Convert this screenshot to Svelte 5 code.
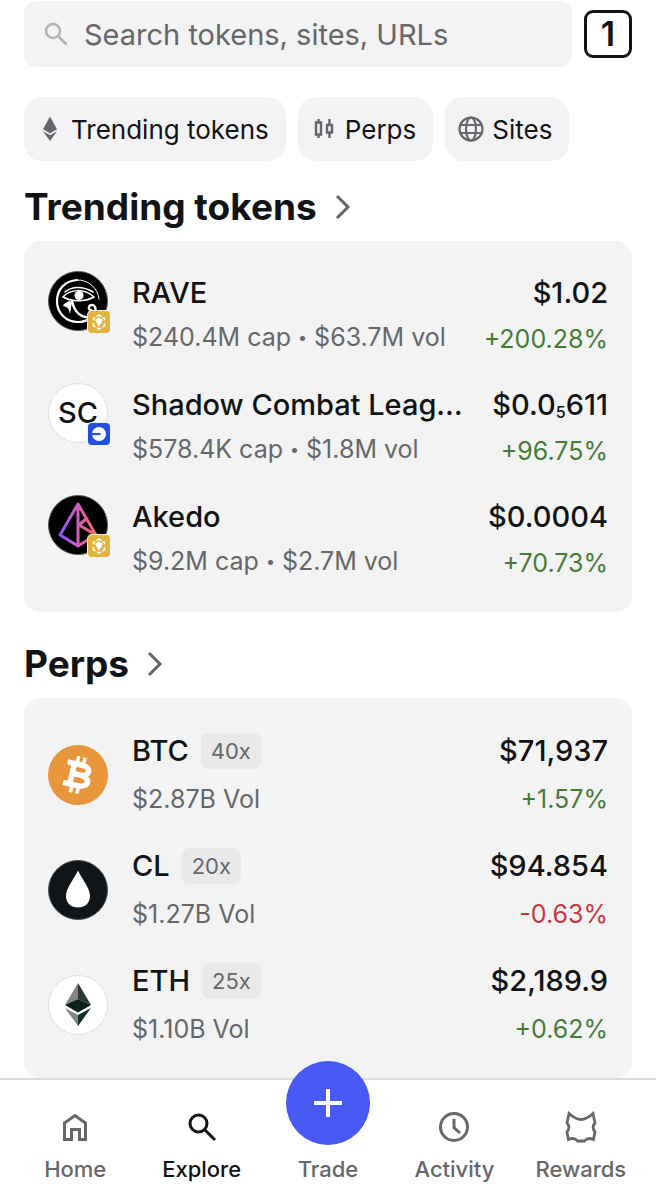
<script lang="ts">
  type Row = {
    icon: string;
    name: string;
    badge?: string;
    leverage?: string;
    detail: string[];
    price: string;
    sub?: string;
    rest?: string;
    change: string;
  };

  const chips = [
    { icon: "eth", label: "Trending tokens" },
    { icon: "candles", label: "Perps" },
    { icon: "globe", label: "Sites" },
  ];

  const tokens: Row[] = [
    { icon: "rave", badge: "bnb", name: "RAVE", detail: ["$240.4M cap", "$63.7M vol"], price: "$1.02", change: "+200.28%" },
    { icon: "sc", badge: "base", name: "Shadow Combat Leag…", detail: ["$578.4K cap", "$1.8M vol"], price: "$0.0", sub: "5", rest: "611", change: "+96.75%" },
    { icon: "akedo", badge: "bnb", name: "Akedo", detail: ["$9.2M cap", "$2.7M vol"], price: "$0.0004", change: "+70.73%" },
  ];

  const perps: Row[] = [
    { icon: "btc", name: "BTC", leverage: "40x", detail: ["$2.87B Vol"], price: "$71,937", change: "+1.57%" },
    { icon: "oil", name: "CL", leverage: "20x", detail: ["$1.27B Vol"], price: "$94.854", change: "-0.63%" },
    { icon: "ethereum", name: "ETH", leverage: "25x", detail: ["$1.10B Vol"], price: "$2,189.9", change: "+0.62%" },
  ];

  const navItems = ["Home", "Explore", "Trade", "Activity", "Rewards"];

  let query = $state("");
  let active = $state("Explore");
</script>

{#snippet chipIcon(name: string)}
  {#if name === "eth"}
    <svg class="chip-icon narrow" viewBox="0 0 16 26" fill="currentColor" aria-hidden="true">
      <path d="M8 0.500 15 13.200 8 17.200 1 13.200Z" />
      <path d="M1 15.200 8 19.200 15 15.200 8 25Z" />
    </svg>
  {:else if name === "candles"}
    <svg class="chip-icon medium" viewBox="0 0 20 26" fill="none" stroke="currentColor" stroke-width="2.400" aria-hidden="true">
      <path d="M2 6.500H7V18.500H2ZM4.500 3V6.500M4.500 18.500V22M13 9H18V16.500H13ZM15.500 3V9M15.500 16.500V22" />
    </svg>
  {:else}
    <svg class="chip-icon" viewBox="0 0 26 26" fill="none" stroke="currentColor" stroke-width="2.200" aria-hidden="true">
      <circle cx="13" cy="13" r="11.500" />
      <ellipse cx="13" cy="13" rx="5" ry="11.500" />
      <path d="M2.500 9H23.500M2.500 17H23.500" />
    </svg>
  {/if}
{/snippet}

{#snippet avatar(name: string)}
  {#if name === "sc"}
    <span class="avatar initials">SC</span>
  {:else}
    <svg class="avatar" viewBox="0 0 60 60" aria-hidden="true">
      {#if name === "rave"}
        <circle cx="30" cy="30" r="29.500" fill="#000" stroke="#55585b" />
        <g fill="none" stroke="#fff" stroke-linecap="round">
          <path d="M29 9A21 21 0 0 1 51 28" stroke-width="1" />
          <path d="M29 9C17 10 9 18 9 30C9 42 18 51 30 51C34 51 38 50 41 48" stroke-width="2.200" />
          <path d="M17 21C24 15 35 15 45 21" stroke-width="1.500" />
          <path d="M15 26C22 18 36 17 46 26C37 31 24 31 15 26Z" stroke-width="1.500" />
          <path d="M24 30C26 41 34 48 43 46C49 44 49 34 44 34C40 34 40 39 43 39" stroke-width="2.400" />
        </g>
        <circle cx="31" cy="24.500" r="4.500" fill="#fff" />
        <path d="M16 33 21 30 24 31 22 43C21 38 20 36 15 35Z" fill="#fff" />
      {:else if name === "akedo"}
        <defs>
          <linearGradient id="akedo" x1="10" y1="35" x2="50" y2="35" gradientUnits="userSpaceOnUse">
            <stop offset="0" stop-color="#8150ff" />
            <stop offset="0.5" stop-color="#d45cc0" />
            <stop offset="1" stop-color="#ff6b50" />
          </linearGradient>
        </defs>
        <circle cx="30" cy="30" r="29.500" fill="#000" stroke="#55585b" />
        <path
          d="M30 9 12 40 30 51 48 40ZM30 10V50M38 24 31 30 48 40"
          fill="none" stroke="url(#akedo)" stroke-width="3" stroke-linejoin="round"
        />
      {:else if name === "btc"}
        <circle cx="30" cy="30" r="30" fill="#e8963c" />
        <g transform="rotate(13 30 30)" fill="none" stroke="#fff">
          <path d="M17 19.500H32C42 19.500 42 29.500 32 29.500H25M31 29.500C44 29.500 44 40.500 32 40.500H17M24 19V41" stroke-width="5.500" />
          <path d="M26.500 11.500V19M33 11.500V19M26.500 41V48.500M33 41V48.500" stroke-width="3.500" />
        </g>
      {:else if name === "oil"}
        <circle cx="30" cy="30" r="29.500" fill="#101519" stroke="#4b4f53" />
        <path d="M30 10.500C26 19 18 28 18 36C18 43 23 47.500 30 47.500S42 43 42 36C42 28 34 19 30 10.500Z" fill="#fff" />
      {:else}
        <circle cx="30" cy="30" r="29.500" fill="#fff" stroke="#e0e0e0" />
        <path d="M30 8V24L17 30Z" fill="#848484" />
        <path d="M30 8 43 30 30 24Z" fill="#2b3535" />
        <path d="M30 24 43 30 30 37.500 17 30Z" fill="#10201f" />
        <path d="M17 33 30 40V51Z" fill="#848484" />
        <path d="M43 33 30 40V51Z" fill="#14302d" />
      {/if}
    </svg>
  {/if}
{/snippet}

{#snippet networkBadge(name: string)}
  <svg class="badge" viewBox="0 0 24 24" aria-hidden="true">
    <rect width="24" height="24" rx="5" fill="#f3f3f3" />
    {#if name === "bnb"}
      <rect x="1" y="1" width="22" height="22" rx="4" fill="#e3b341" />
      <path
        d="M9.500 6.500 12 5 14.500 6.500M6.500 10.500V8.200L8 7.300M16 7.300 17.500 8.200V10.500M6.500 13V15.800L8.500 17M17.500 13V15.800L15.500 17M10 18 12 19 14 18M8.500 9.500 12 11.500 15.500 9.500M12 11.500V16"
        fill="none" stroke="#fff" stroke-width="1.500"
      />
      <path d="M12 7.500 15.500 9.500 14.500 13 12 15.500 9.500 13 8.500 9.500Z" fill="#fff" />
    {:else}
      <rect x="1" y="1" width="22" height="22" rx="4" fill="#214fe0" />
      <circle cx="12" cy="12" r="7" fill="#fff" />
      <path d="M5 12H13.500" stroke="#214fe0" stroke-width="2" />
    {/if}
  </svg>
{/snippet}

{#snippet section(title: string, rows: Row[], kind: string)}
  <section>
    <h2>
      <a href="#{kind}">
        {title}
        <svg class="chevron" viewBox="0 0 16 26" fill="none" stroke="#66676a" stroke-width="3" aria-hidden="true">
          <path d="M2 2 13 13 2 24" />
        </svg>
      </a>
    </h2>
    <ul class="card {kind}">
      {#each rows as row}
        <li class="row">
          <div class="logo">
            {@render avatar(row.icon)}
            {#if row.badge}
              {@render networkBadge(row.badge)}
            {/if}
          </div>
          <div class="info">
            <div class="title">
              <span class="name">{row.name}</span>
              {#if row.leverage}
                <span class="leverage">{row.leverage}</span>
              {/if}
            </div>
            <div class="detail">
              {row.detail[0]}
              {#if row.detail[1]}
                <span class="dot">•</span>
                {row.detail[1]}
              {/if}
            </div>
          </div>
          <div class="values">
            <div class="price">{row.price}{#if row.sub}<sub>{row.sub}</sub>{row.rest}{/if}</div>
            <div class="change" class:down={row.change.startsWith("-")}>{row.change}</div>
          </div>
        </li>
      {/each}
    </ul>
  </section>
{/snippet}

<div class="app">
  <main>
    <div class="top">
      <label class="search">
        <svg viewBox="0 0 24 24" fill="none" stroke="#b4b4b5" stroke-width="2.500" aria-hidden="true">
          <circle cx="9" cy="9" r="7" />
          <path d="M14 14 22.500 22.500" />
        </svg>
        <input type="text" aria-label="Search" placeholder="Search tokens, sites, URLs" bind:value={query} />
      </label>
      <button class="tabs" aria-label="1 open tab">1</button>
    </div>

    <div class="chips">
      {#each chips as chip}
        <button class="chip">
          {@render chipIcon(chip.icon)}
          {chip.label}
        </button>
      {/each}
    </div>

    {@render section("Trending tokens", tokens, "tokens")}
    {@render section("Perps", perps, "perps")}
  </main>

  <nav>
    {#each navItems as item}
      <button class="nav-item" class:active={active === item} onclick={() => (active = item)}>
        {#if item === "Trade"}
          <span class="trade">
            <svg viewBox="0 0 28 28" stroke="#fff" stroke-width="4" aria-hidden="true">
              <path d="M14 0V28M0 14H28" />
            </svg>
          </span>
        {:else}
          <svg class="nav-icon" viewBox="0 0 32 32" fill="none" stroke="currentColor" stroke-width="3" aria-hidden="true">
            {#if item === "Home"}
              <path d="M5.500 12 16 4.500 26.500 12V28.500H20.500V18.500H12.500V28.500H5.500Z" />
            {:else if item === "Explore"}
              <circle cx="12.500" cy="12.500" r="8.500" />
              <path d="M18.500 18.500 29 29" />
            {:else if item === "Activity"}
              <circle cx="16" cy="16" r="13.500" />
              <path d="M16 8V16.500L22 22" />
            {:else}
              <path
                d="M4 2.500C8 6 11 8.500 16 8.500S24 6 28 2.500L30 12C27.500 15 27.500 18 30 21L28.500 28.500C24 26.500 21.500 27.500 19.500 30H12.500C10.500 27.500 8 26.500 3.500 28.500L2 21C4.500 18 4.500 15 2 12Z"
                stroke-width="2.800"
              />
            {/if}
          </svg>
        {/if}
        <span>{item}</span>
      </button>
    {/each}
  </nav>
</div>

<style>
  :global(body) {
    margin: 0;
    background: #fff;
  }

  .app {
    font-family: Inter, "Liberation Sans", sans-serif;
    color: #121314;
  }

  button,
  input {
    font: inherit;
    color: inherit;
    border: none;
    background: none;
    padding: 0;
  }

  button {
    cursor: pointer;
  }

  main {
    padding: 1px 24px 0;
  }

  .top {
    display: flex;
    align-items: center;
    gap: 12px;
  }

  .search {
    flex: 1;
    display: flex;
    align-items: center;
    gap: 16px;
    height: 66px;
    padding: 0 20px;
    border-radius: 12px;
    background: #f3f3f3;
    box-sizing: border-box;
  }

  .search svg {
    width: 24px;
    height: 24px;
    flex-shrink: 0;
  }

  .search input {
    flex: 1;
    min-width: 0;
    font-size: 29px;
    outline: none;
  }

  .search input::placeholder {
    color: #66676a;
    opacity: 1;
  }

  .tabs {
    width: 48px;
    height: 48px;
    border: 3px solid #121314;
    border-radius: 9px;
    font-size: 34px;
    font-weight: 600;
    line-height: 40px;
  }

  .chips {
    display: flex;
    gap: 12px;
    margin-top: 30px;
  }

  .chip {
    display: flex;
    align-items: center;
    gap: 8px;
    height: 64px;
    padding: 0 17px 0 13px;
    border-radius: 18px;
    background: #f3f3f5;
    font-size: 26px;
    white-space: nowrap;
  }

  .chip-icon {
    width: 26px;
    height: 26px;
    color: #66676a;
  }

  .chip-icon.narrow {
    width: 16px;
    margin: 0 5px;
  }

  .chip-icon.medium {
    width: 20px;
    margin: 0 3px;
  }

  h2 {
    margin: 0;
    padding: 24px 0 12px;
    font-size: 37px;
    font-weight: 700;
    line-height: 44px;
  }

  h2 a {
    display: inline-flex;
    align-items: center;
    gap: 18px;
    color: inherit;
    text-decoration: none;
  }

  .chevron {
    width: 16px;
    height: 26px;
  }

  section + section h2 {
    padding-top: 30px;
  }

  .card {
    list-style: none;
    margin: 0;
    padding: 18px 24px 17px;
    border-radius: 16px;
    background: #f3f3f3;
  }

  .row {
    display: flex;
    gap: 24px;
    padding: 12px 0 8px;
  }

  .logo {
    position: relative;
    width: 60px;
    height: 60px;
    flex-shrink: 0;
  }

  .avatar {
    display: block;
    width: 60px;
    height: 60px;
  }

  .initials {
    box-sizing: border-box;
    border: 1px solid #e0e0e0;
    border-radius: 50%;
    background: #fff;
    font-size: 29px;
    font-weight: 500;
    line-height: 58px;
    text-align: center;
  }

  .badge {
    position: absolute;
    right: -3px;
    bottom: -3px;
    width: 24px;
    height: 24px;
  }

  .info {
    flex: 1;
    min-width: 0;
  }

  .title {
    display: flex;
    align-items: center;
    gap: 12px;
  }

  .name,
  .price {
    font-size: 29px;
    font-weight: 500;
    line-height: 44px;
  }

  .name {
    overflow: hidden;
    text-overflow: ellipsis;
    white-space: nowrap;
  }

  .leverage {
    padding: 0 10px;
    border-radius: 8px;
    background: #e9e9e9;
    color: #66676a;
    font-size: 22px;
    line-height: 36px;
  }

  .detail,
  .change {
    color: #66676a;
    font-size: 25px;
    line-height: 44px;
    white-space: nowrap;
  }

  .dot {
    font-size: 16px;
    line-height: 1;
    vertical-align: 3px;
  }

  .values {
    text-align: right;
  }

  .price sub {
    font-size: 16px;
    line-height: 1;
    vertical-align: -3px;
  }

  .change {
    color: #457b39;
    line-height: 48px;
  }

  .change.down {
    color: #ca3542;
  }

  .perps .row {
    align-items: center;
    padding: 11px 0 8px;
  }

  .perps .name,
  .perps .price,
  .perps .detail {
    line-height: 48px;
  }

  nav {
    position: sticky;
    bottom: 0;
    display: flex;
    padding: 0 12px;
    border-top: 2px solid #dcdcdc;
    background: #fff;
  }

  .nav-item {
    flex: 1 1 0;
    display: flex;
    flex-direction: column;
    align-items: center;
    height: 120px;
    padding-top: 31px;
    color: #66676a;
    font-size: 22px;
    font-weight: 500;
    line-height: 28px;
  }

  .nav-item.active {
    color: #121314;
  }

  .nav-icon {
    width: 32px;
    height: 32px;
    margin-bottom: 12px;
  }

  .trade {
    display: flex;
    align-items: center;
    justify-content: center;
    width: 84px;
    height: 84px;
    margin: -50px 0 10px;
    border-radius: 50%;
    background: #4859f5;
  }

  .trade svg {
    width: 28px;
    height: 28px;
  }
</style>
